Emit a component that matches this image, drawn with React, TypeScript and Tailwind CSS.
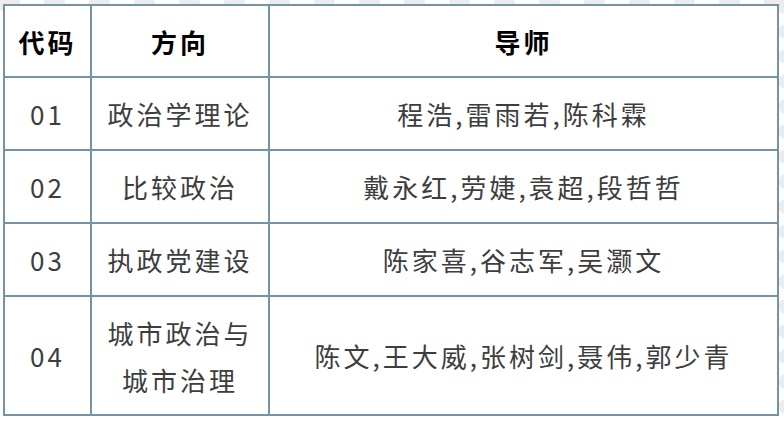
import React from 'react';

const rows = [
  { code: '01', field: ['政治学理论'], tutors: '程浩,雷雨若,陈科霖', h: 'h-[71px]' },
  { code: '02', field: ['比较政治'], tutors: '戴永红,劳婕,袁超,段哲哲', h: 'h-[71px]' },
  { code: '03', field: ['执政党建设'], tutors: '陈家喜,谷志军,吴灏文', h: 'h-[71px]' },
  { code: '04', field: ['城市政治与', '城市治理'], tutors: '陈文,王大威,张树剑,聂伟,郭少青', h: 'h-[117px]' },
];

const cell = 'bg-white flex flex-col items-center justify-center text-center';

export default function App() {
  return (
    <div className="relative w-[784px] h-[422px] overflow-hidden bg-white font-['Noto_Sans_CJK_SC','Noto_Sans',sans-serif]">
      {/* faint decorative dots behind the table */}
      <div className="absolute left-[-13px] top-[-14px] h-[36px] w-[830px] bg-[radial-gradient(circle,#ececec_10px,transparent_11px)] bg-[length:45px_36px]" />
      <div className="absolute right-[-11px] top-[-6px] h-[440px] w-[18px] bg-[radial-gradient(circle,#ececec_7px,transparent_8px)] bg-[length:18px_25px]" />

      <div className="relative ml-[3px] mt-[4px] w-[776px] grid grid-cols-[85px_176px_507px] gap-[2px] p-[2px] bg-[#7593a6]">
        <div className={`${cell} h-[70px] text-[26px] font-bold text-black tracking-[3px]`}>代码</div>
        <div className={`${cell} h-[70px] text-[26px] font-bold text-black tracking-[3px]`}>方向</div>
        <div className={`${cell} h-[70px] text-[26px] font-bold text-black tracking-[3px]`}>导师</div>

        {rows.map((r) => (
          <React.Fragment key={r.code}>
            <div className={`${cell} ${r.h} text-[26px] text-[#3d3d3d] tracking-[3px]`}>{r.code}</div>
            <div className={`${cell} ${r.h} text-[26px] leading-[47px] text-[#3d3d3d] tracking-[3px]`}>
              {r.field.map((line) => (
                <span key={line}>{line}</span>
              ))}
            </div>
            <div className={`${cell} ${r.h} text-[26px] text-[#3d3d3d] tracking-[3px]`}>{r.tutors}</div>
          </React.Fragment>
        ))}
      </div>
    </div>
  );
}
